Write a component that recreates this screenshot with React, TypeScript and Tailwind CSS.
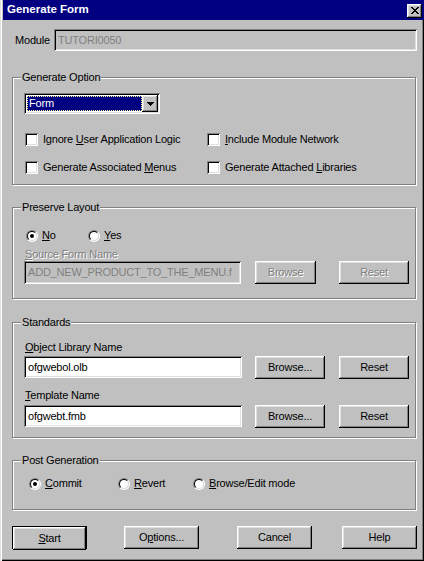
import type { ReactNode } from "react";

const raised =
  "shadow-[inset_-1px_-1px_#000,inset_1px_1px_#fff,inset_-2px_-2px_#808080,inset_2px_2px_#dfdfdf]";
const sunken =
  "shadow-[inset_1px_1px_#808080,inset_-1px_-1px_#fff,inset_2px_2px_#000,inset_-2px_-2px_#dfdfdf]";
const disabledText = "text-[#808080] [text-shadow:1px_1px_0_#fff]";

function Group({ title, className, children }: { title: string; className: string; children: ReactNode }) {
  return (
    <div className={`relative w-[404px] border border-[#808080] shadow-[1px_1px_#fff,inset_1px_1px_#fff] ${className}`}>
      <span className="absolute -top-[7px] left-[8px] bg-[#c0c0c0] px-[1px] leading-[13px]">{title}</span>
      {children}
    </div>
  );
}

function Check({ children }: { children: ReactNode }) {
  return (
    <div className="flex h-[13px] items-center">
      <span className={`h-[13px] w-[13px] shrink-0 bg-white ${sunken}`} />
      <span className="ml-[5px] leading-[13px]">{children}</span>
    </div>
  );
}

function Radio({ checked, children, className = "" }: { checked?: boolean; children: ReactNode; className?: string }) {
  return (
    <div className={`flex h-[13px] items-center ${className}`}>
      <span className="h-[12px] w-[12px] shrink-0 rounded-full border border-t-[#808080] border-l-[#808080] border-b-white border-r-white">
        <span className="flex h-full w-full items-center justify-center rounded-full border border-t-black border-l-black border-b-[#dfdfdf] border-r-[#dfdfdf] bg-white">
          {checked && <span className="h-[4px] w-[4px] rounded-full bg-black" />}
        </span>
      </span>
      <span className="ml-[4px] leading-[13px]">{children}</span>
    </div>
  );
}

function Button({ children, className = "", disabled }: { children: ReactNode; className?: string; disabled?: boolean }) {
  return (
    <div className={`flex h-[23px] items-center justify-center bg-[#c0c0c0] ${raised} ${disabled ? disabledText : ""} ${className}`}>
      {children}
    </div>
  );
}

function Field({ value, className = "", disabled }: { value: string; className?: string; disabled?: boolean }) {
  return (
    <div
      className={`flex items-center pl-[4px] leading-[13px] ${sunken} ${
        disabled ? "bg-[#c0c0c0] text-[#808080]" : "bg-white"
      } ${className}`}
    >
      {value}
    </div>
  );
}

export default function App() {
  return (
    <div className="h-[561px] w-[424px] overflow-hidden bg-[#c0c0c0] text-[11px] tracking-[-0.2px] text-black shadow-[inset_1px_0_#dfdfdf,inset_2px_0_#fff,inset_-1px_-1px_#000,inset_-2px_-2px_#808080] [font-family:'Liberation_Sans',Arial,sans-serif]">
      {/* Title bar */}
      <div className="ml-[3px] flex h-[20px] items-center bg-[#000080] pl-[4px] pr-[2px]">
        <span className="flex-1 text-[11.5px] font-bold tracking-normal text-white">Generate Form</span>
        <div className={`mt-[2px] flex h-[14px] w-[15px] items-center justify-center bg-[#c0c0c0] ${raised}`}>
          <svg width="8" height="7" viewBox="0 0 8 7" shapeRendering="crispEdges" className="-mt-[1px]">
            <path
              d="M0 0h2v1H0zM6 0h2v1H6zM1 1h2v1H1zM5 1h2v1H5zM2 2h4v1H2zM3 3h2v1H3zM2 4h4v1H2zM1 5h2v1H1zM5 5h2v1H5zM0 6h2v1H0zM6 6h2v1H6z"
              fill="#000"
            />
          </svg>
        </div>
      </div>

      <div className="pl-[12px]">
        {/* Module */}
        <div className="mt-[9px] flex h-[22px] items-center">
          <span className="ml-[3px] w-[39px]">Module</span>
          <Field value="TUTORI0050" disabled className="h-[22px] w-[363px]" />
        </div>

        {/* Generate Option */}
        <Group title="Generate Option" className="mt-[26px] h-[108px] pl-[11px] pt-[15px]">
          <div className={`flex h-[21px] w-[136px] items-center bg-white p-[2px] ${sunken}`}>
            <div className="ml-[1px] flex h-[15px] flex-1 items-center border border-dotted border-[#ffff90] bg-[#000080] pl-[1px] leading-[13px] text-white">
              Form
            </div>
            <div className={`flex h-[17px] w-[16px] items-center justify-center bg-[#c0c0c0] ${raised}`}>
              <svg width="7" height="4" viewBox="0 0 7 4" shapeRendering="crispEdges">
                <path d="M0 0h7v1H0zM1 1h5v1H1zM2 2h3v1H2zM3 3h1v1H3z" fill="#000" />
              </svg>
            </div>
          </div>
          <div className="ml-[1px] mt-[19px] grid grid-cols-[182px_1fr] gap-y-[15px]">
            <Check>
              Ignore <u>U</u>ser Application Logic
            </Check>
            <Check>
              <u>I</u>nclude Module Network
            </Check>
            <Check>
              Generate Associated <u>M</u>enus
            </Check>
            <Check>
              Generate Attached <u>L</u>ibraries
            </Check>
          </div>
        </Group>

        {/* Preserve Layout */}
        <Group title="Preserve Layout" className="mt-[22px] h-[92px] pl-[11px] pt-[21px]">
          <div className="ml-[2px] flex">
            <Radio checked className="w-[62px]">
              <u>N</u>o
            </Radio>
            <Radio>
              <u>Y</u>es
            </Radio>
          </div>
          <div className={`ml-[1px] mt-[6px] leading-[13px] ${disabledText}`}>
            <u>S</u>ource Form Name
          </div>
          <div className="flex">
            <Field value="ADD_NEW_PRODUCT_TO_THE_MENU.f" disabled className="h-[23px] w-[217px] overflow-hidden whitespace-nowrap" />
            <Button disabled className="ml-[14px] w-[61px]">
              Browse
            </Button>
            <Button disabled className="ml-[23px] w-[70px]">
              Reset
            </Button>
          </div>
        </Group>

        {/* Standards */}
        <Group title="Standards" className="mt-[23px] h-[116px] pl-[11px] pt-[18px]">
          <div className="ml-[1px] leading-[13px]">
            <u>O</u>bject Library Name
          </div>
          <div className="mt-[2px] flex">
            <Field value="ofgwebol.olb" className="h-[22px] w-[218px]" />
            <Button className="ml-[13px] h-[22px] w-[70px]">Browse...</Button>
            <Button className="ml-[14px] h-[22px] w-[70px]">Reset</Button>
          </div>
          <div className="ml-[1px] mt-[10px] leading-[13px]">
            <u>T</u>emplate Name
          </div>
          <div className="mt-[3px] flex">
            <Field value="ofgwebt.fmb" className="h-[22px] w-[218px]" />
            <Button className="ml-[13px] h-[22px] w-[70px]">Browse...</Button>
            <Button className="ml-[14px] h-[22px] w-[70px]">Reset</Button>
          </div>
        </Group>

        {/* Post Generation */}
        <Group title="Post Generation" className="mt-[22px] h-[50px] pl-[16px] pt-[16px]">
          <div className="flex">
            <Radio checked className="w-[89px]">
              <u>C</u>ommit
            </Radio>
            <Radio className="w-[75px]">
              <u>R</u>evert
            </Radio>
            <Radio>
              <u>B</u>rowse/Edit mode
            </Radio>
          </div>
        </Group>

        {/* Bottom buttons */}
        <div className="mt-[16px] flex">
          <div className="h-[23px] w-[75px] border border-black">
            <Button className="h-[21px] w-full">
              <u>S</u>tart
            </Button>
          </div>
          <Button className="ml-[37px] w-[75px]">
            O<u>p</u>tions...
          </Button>
          <Button className="ml-[38px] w-[75px]">Cancel</Button>
          <Button className="ml-[30px] w-[75px]">Help</Button>
        </div>
      </div>
    </div>
  );
}
